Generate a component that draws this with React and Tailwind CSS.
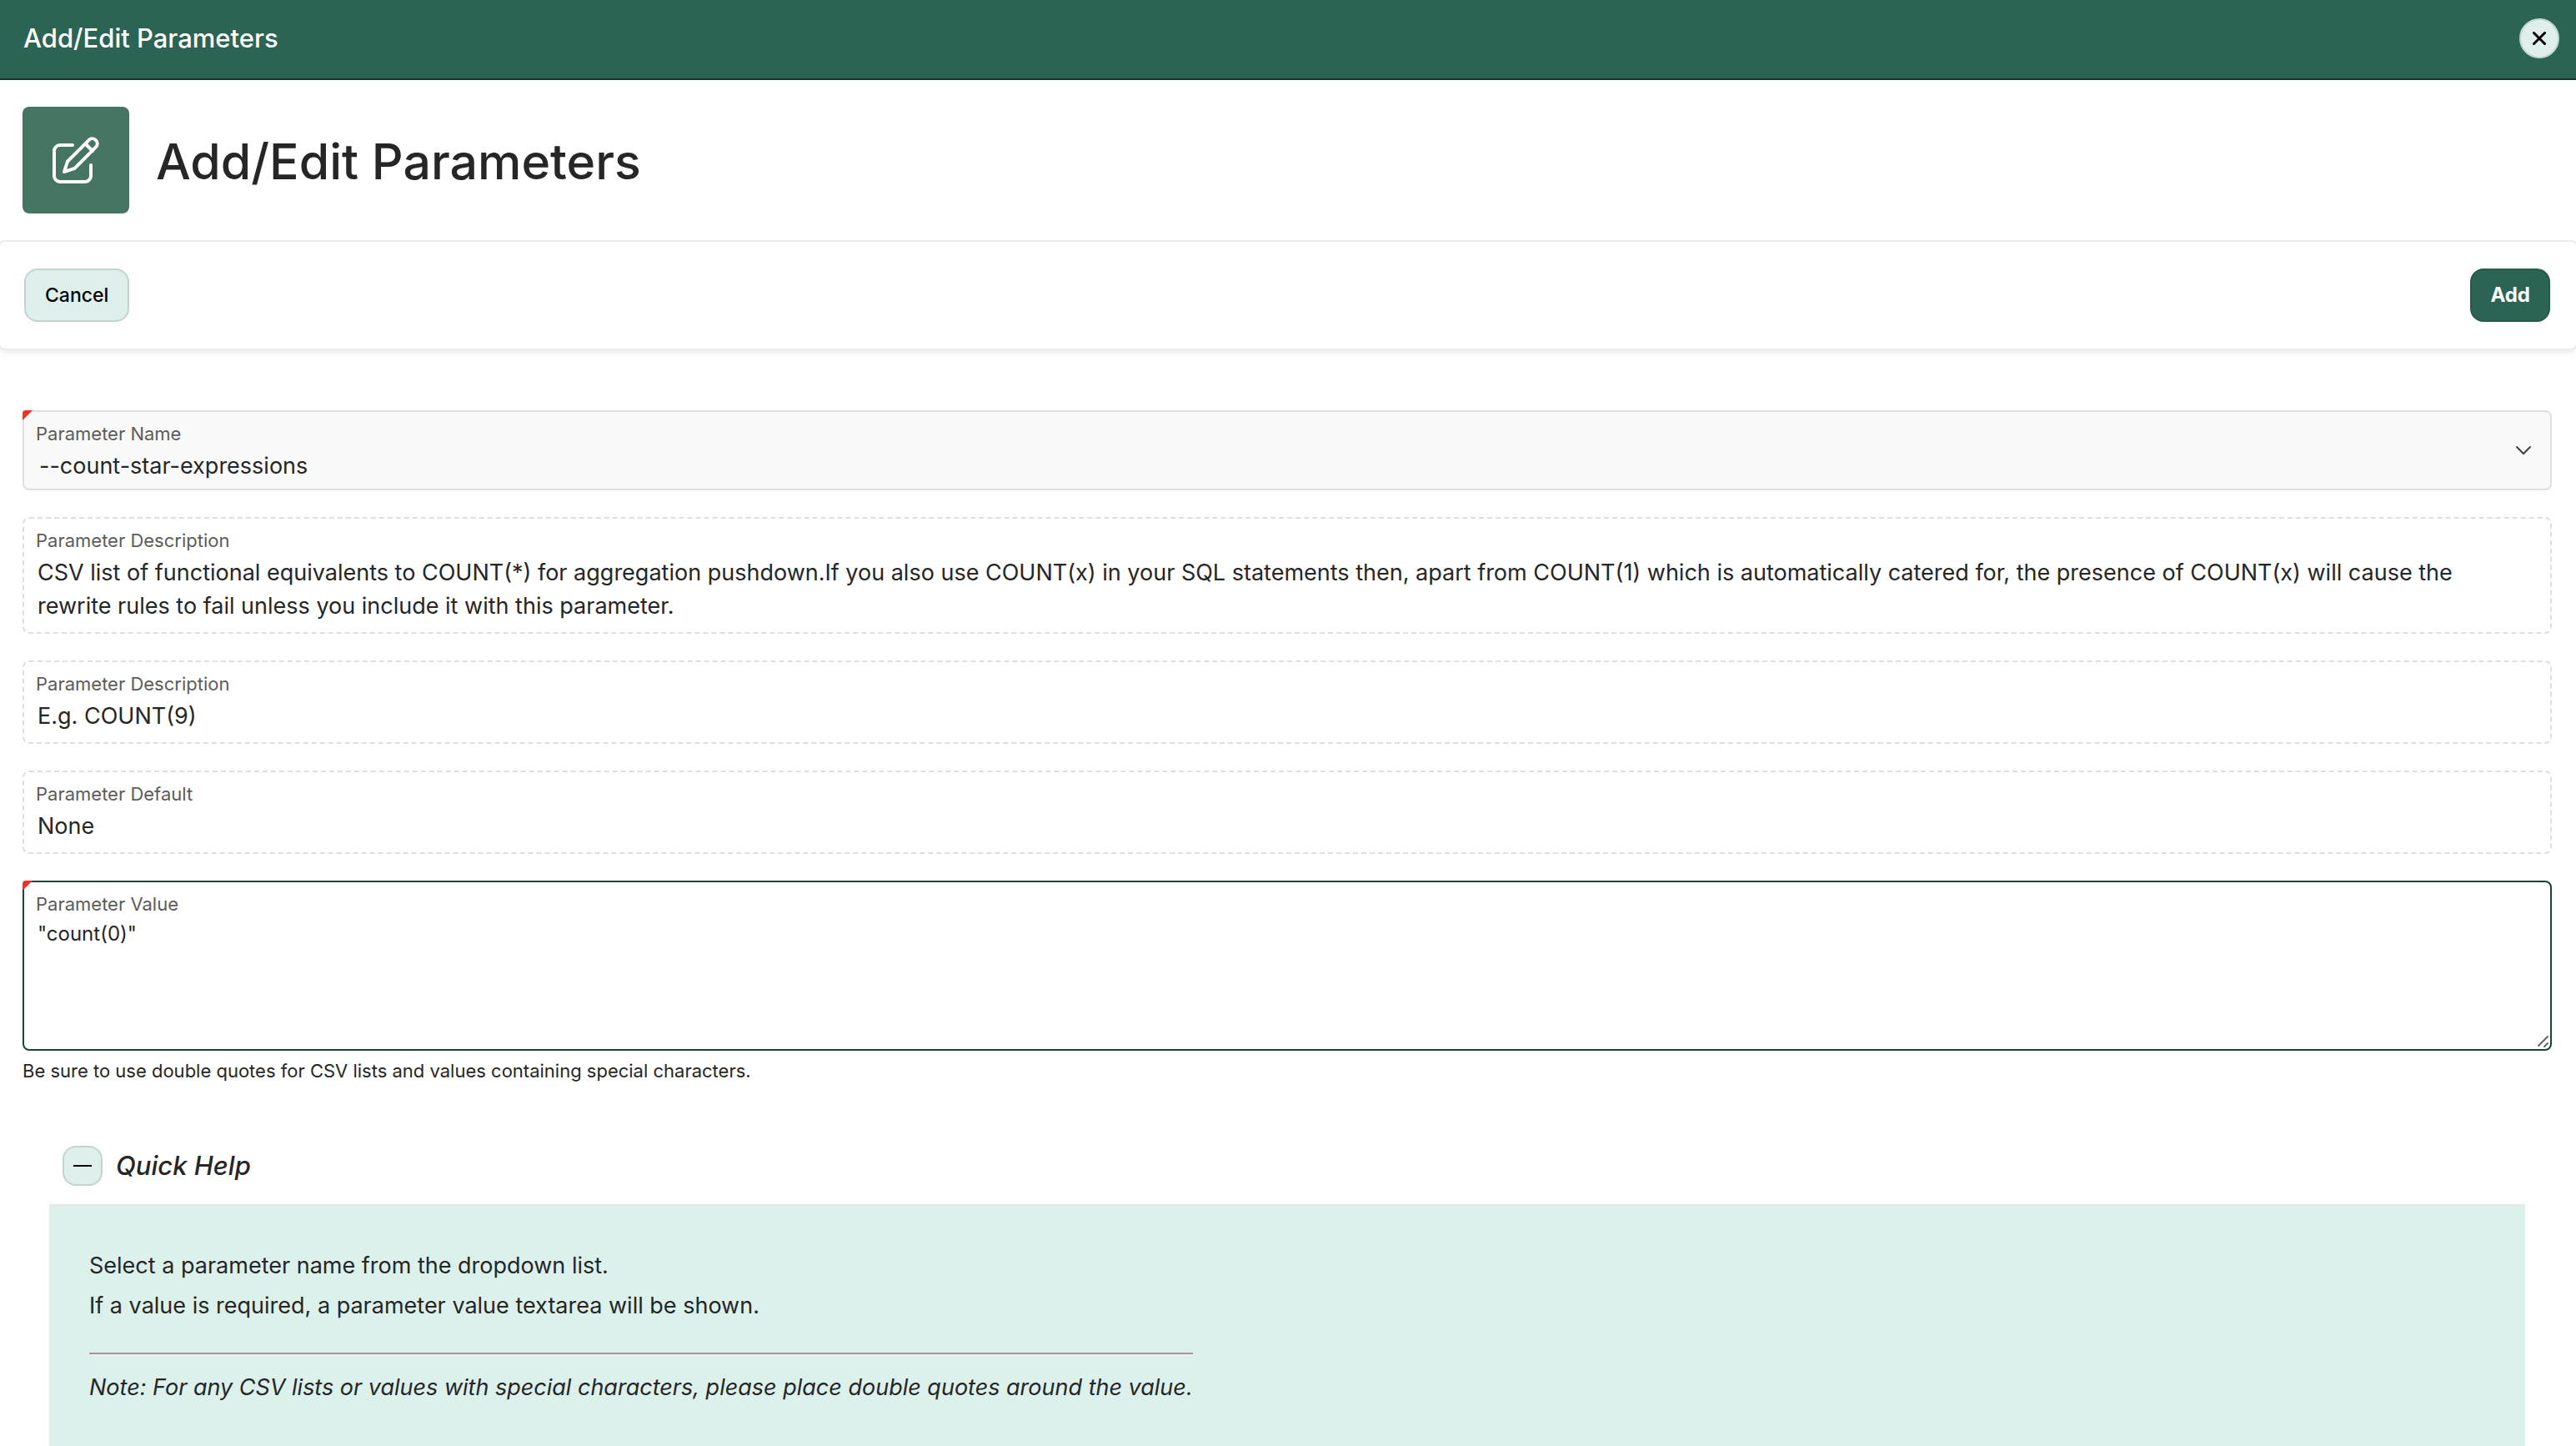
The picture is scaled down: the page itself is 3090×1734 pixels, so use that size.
import React from "react";

function EditIcon() {
  return (
    <svg viewBox="0 0 64 64" className="size-16" fill="none" stroke="currentColor" strokeWidth="4" strokeLinecap="round" strokeLinejoin="round" aria-hidden="true">
      <path d="M28 14H13a7 7 0 0 0-7 7v30a7 7 0 0 0 7 7h30a7 7 0 0 0 7-7V38" />
      <path d="M22 33.600 47.800 7.800a5.950 5.950 0 0 1 8.400 8.400L30.600 41.800 18 46ZM43.500 12.500l8.500 8.500" />
    </svg>
  );
}

function RequiredMark() {
  return <span className="absolute -left-0.5 -top-0.5 size-3 rounded-tl bg-[#ee3124] [clip-path:polygon(0_0,100%_0,0_100%)]" />;
}

function DisplayField({ id, label, children }) {
  return (
    <div className="rounded-lg border-2 border-dashed border-[#dfdfdf] pb-[11px] pl-3.5 pr-12 pt-2.5" role="group" aria-labelledby={id}>
      <div id={id} className="text-[22px] leading-8 text-[#5c5c5c]">{label}</div>
      <p className="pl-0.5 pt-[3px] text-[27px] leading-10">{children}</p>
    </div>
  );
}

export default function App() {
  return (
    <div className="min-h-screen overflow-x-hidden bg-white font-['Inter',sans-serif] text-[#262626]">
      <header className="flex h-24 items-center justify-between border-b-2 border-[#1b332d] bg-[#2b6455] pb-0.5 pl-7 pr-5 text-white">
        <span className="text-[31px] font-medium leading-10">Add/Edit Parameters</span>
        <button type="button" aria-label="Close" className="flex size-12 items-center justify-center rounded-full border-2 border-[#c3d3ce] bg-[#dff0ec] text-black">
          <svg viewBox="0 0 16 16" className="size-4" stroke="currentColor" strokeWidth="3" strokeLinecap="round" aria-hidden="true">
            <path d="M1.500 1.500l13 13M14.500 1.500l-13 13" />
          </svg>
        </button>
      </header>

      <div className="flex items-center gap-8 py-8 pl-[27px] pr-[29px]">
        <span className="flex size-32 items-center justify-center rounded-lg bg-[#477564] text-white">
          <EditIcon />
        </span>
        <h1 className="pt-1 text-[59px] font-medium leading-20">Add/Edit Parameters</h1>
      </div>

      <div className="-mx-0.5 flex items-center justify-between rounded-lg border-2 border-[#ececec] py-8 pl-[29px] pr-[31px] shadow-[0_4px_8px_-2px_rgba(0,0,0,0.1)]">
        <button type="button" className="h-16 rounded-2xl border-2 border-[#c3d3ce] bg-[#dff0ec] px-[23px] text-[23px] font-medium text-black">Cancel</button>
        <button type="button" className="h-16 rounded-2xl border-2 border-[#275a4d] bg-[#2b6455] px-[22px] text-2xl font-bold text-white">Add</button>
      </div>

      <main className="flex flex-col gap-8 pl-[27px] pr-[29px] pt-18">
        <div className="relative h-24 rounded-lg border-2 border-[#dfdfdf] bg-[#f9f9f9]">
          <RequiredMark />
          <label htmlFor="param-name" className="pointer-events-none absolute left-3.5 top-2.5 text-[22px] leading-8 text-[#5c5c5c]">Parameter Name</label>
          <select id="param-name" defaultValue="--count-star-expressions" className="h-full w-full appearance-none bg-transparent pb-1.5 pl-[18px] pt-11 text-[27px] leading-10 outline-none">
            <option>--count-star-expressions</option>
          </select>
          <svg viewBox="0 0 20 12" className="pointer-events-none absolute right-[22px] top-10 h-3 w-5" fill="none" stroke="#404040" strokeWidth="2" strokeLinecap="round" aria-hidden="true">
            <path d="M2 2l8 8 8-8" />
          </svg>
        </div>

        <DisplayField id="desc" label="Parameter Description">
          CSV list of functional equivalents to COUNT(*) for aggregation pushdown.If you also use COUNT(x) in your SQL statements then, apart from COUNT(1) which is automatically catered for, the presence of COUNT(x) will cause the rewrite rules to fail unless you include it with this parameter.
        </DisplayField>
        <DisplayField id="example" label="Parameter Description">E.g. COUNT(9)</DisplayField>
        <DisplayField id="default" label="Parameter Default">None</DisplayField>

        <div>
          <div className="relative rounded-lg border-2 border-[#1d4237] bg-white pt-2.5">
            <RequiredMark />
            <label htmlFor="param-value" className="block px-3.5 text-[22px] leading-8 text-[#5c5c5c]">Parameter Value</label>
            <textarea id="param-value" defaultValue={'"count(0)"'} className="block h-[158px] w-full resize-none bg-transparent px-4 pt-1 text-2xl leading-8 outline-none" />
            <svg viewBox="0 0 16 16" className="pointer-events-none absolute bottom-px right-px size-4" stroke="#666" strokeWidth="2" strokeLinecap="round" aria-hidden="true">
              <path d="M3 13 14 2M10 14l4-4" />
            </svg>
          </div>
          <p className="pt-2 text-[22px] leading-8">Be sure to use double quotes for CSV lists and values containing special characters.</p>
        </div>
      </main>

      <section className="pl-[59px] pr-[61px] pt-[74px]">
        <div className="flex items-center gap-4 px-4 pb-[22px]">
          <button type="button" aria-label="Collapse Quick Help" className="flex size-12 items-center justify-center rounded-2xl border-2 border-[#c3d3ce] bg-[#dff0ec]">
            <span className="h-0.5 w-[22px] bg-black" />
          </button>
          <h2 className="text-[31px] font-medium italic leading-10">Quick Help</h2>
        </div>
        <div className="border-t-2 border-[#e6e8e7] bg-[#dcf0ec] px-12 py-12 text-[27px] leading-12">
          <div className="w-fit">
            <p>Select a parameter name from the dropdown list.</p>
            <p>If a value is required, a parameter value textarea will be shown.</p>
            <hr className="mb-3.5 mt-8 border-y-2 border-b-[#eeeeee] border-t-[#9a9a9a]" />
            <p className="italic">Note: For any CSV lists or values with special characters, please place double quotes around the value.</p>
          </div>
        </div>
      </section>
    </div>
  );
}
